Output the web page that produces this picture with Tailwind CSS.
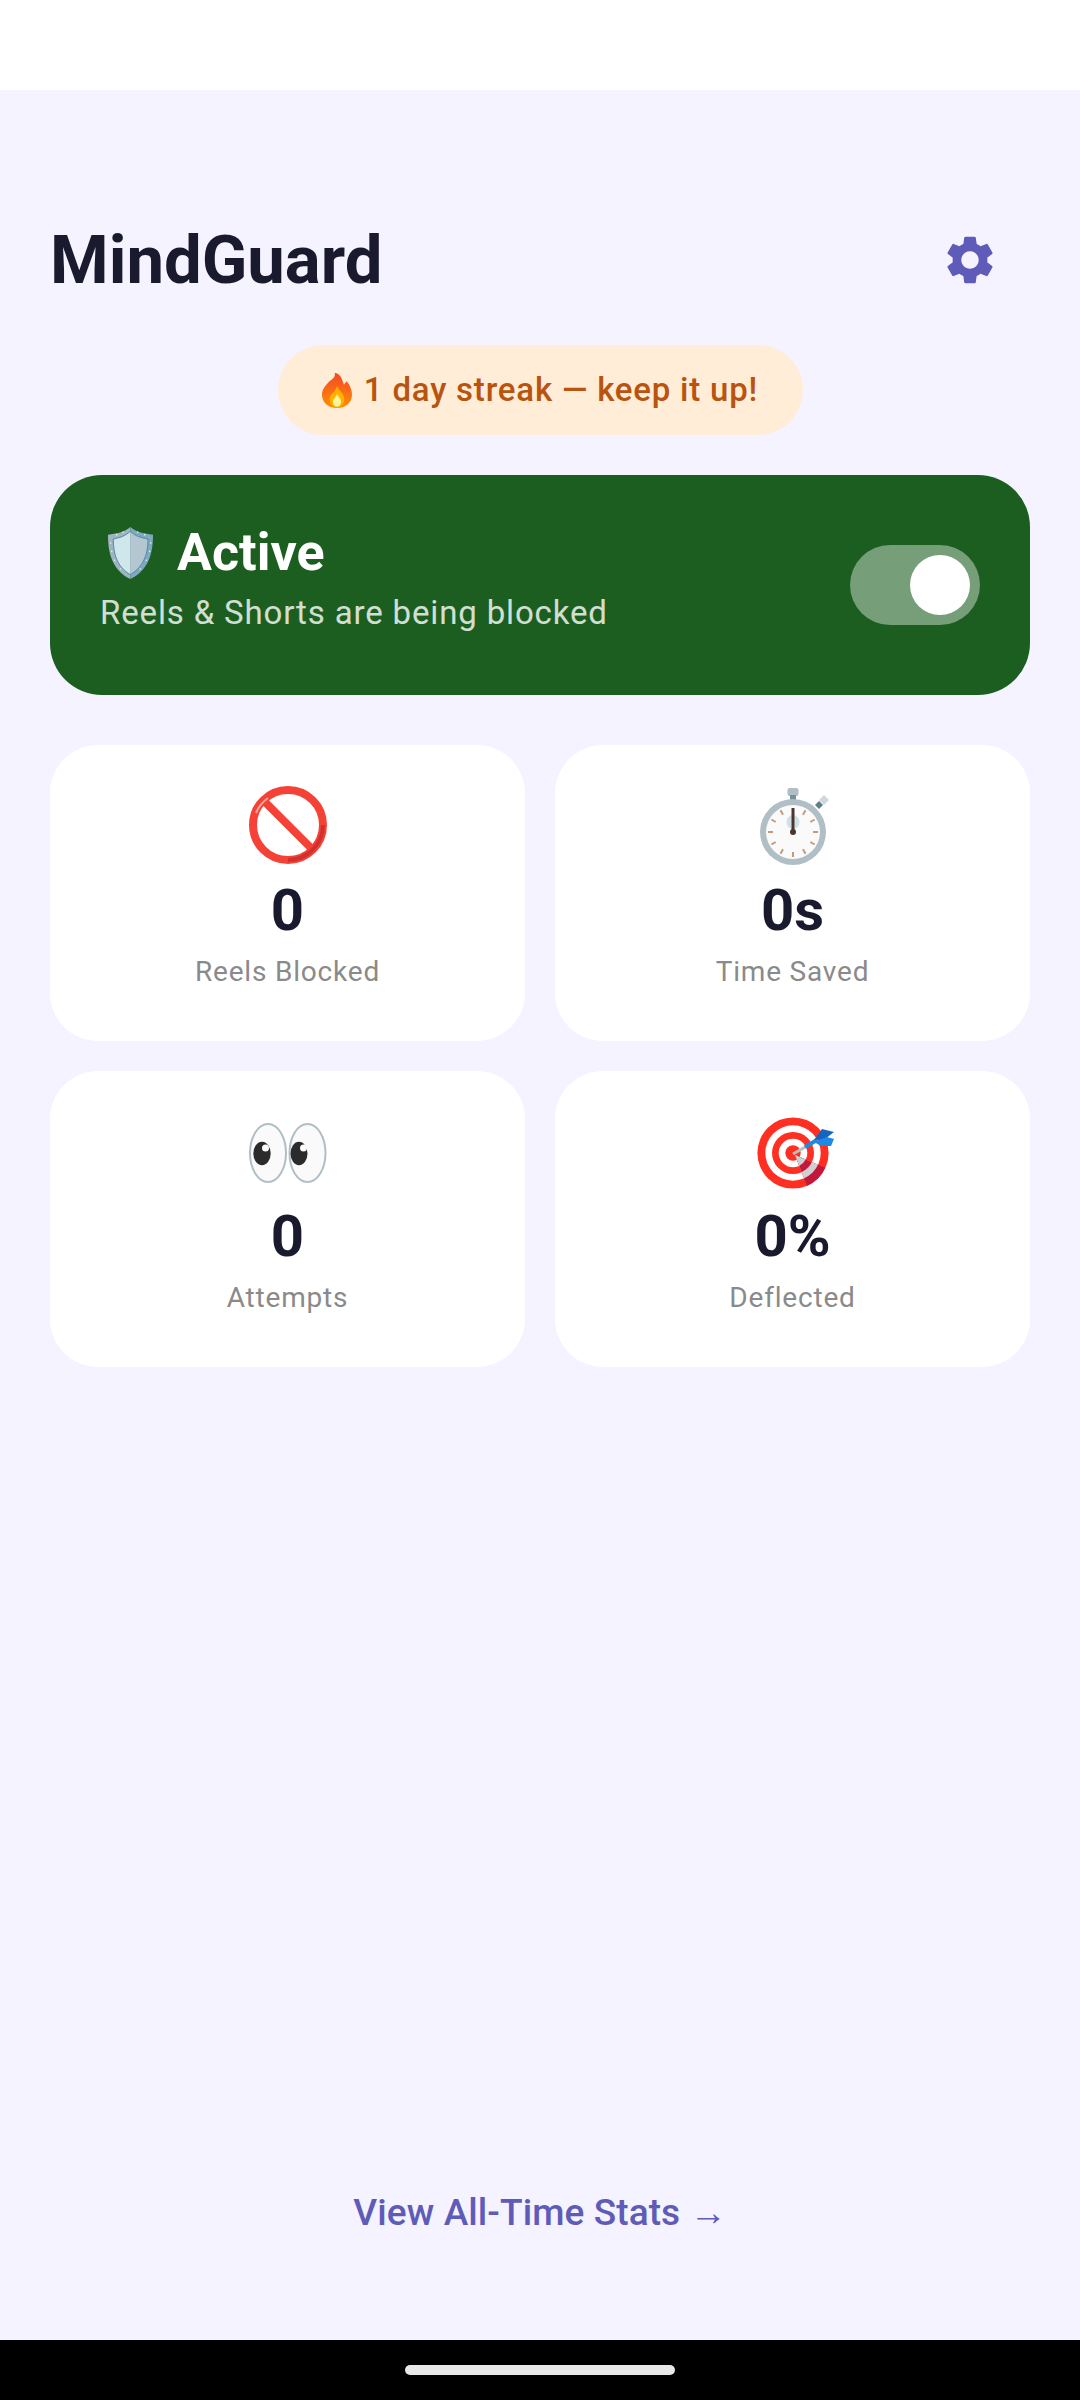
<!DOCTYPE html>
<html lang="en">
<head>
	<meta charset="UTF-8">
	<meta name="viewport" content="width=device-width, initial-scale=1.0">
	<script src="https://cdn.jsdelivr.net/npm/@tailwindcss/browser@4"></script>
	<title>MindGuard</title>
</head>
<body class="w-[1080px] h-[2400px] flex flex-col bg-[#f5f3ff] font-['Roboto',sans-serif] overflow-hidden">
	<!-- status bar area -->
	<div class="h-[90px] bg-white shrink-0"></div>

	<main class="flex-1 flex flex-col px-[50px] pt-[120px]">
		<header class="flex items-center justify-between h-[100px]">
			<h1 class="text-[67px] leading-[100px] font-bold text-[#1a1a2e]">MindGuard</h1>
			<button class="w-[120px] h-[100px] flex items-center justify-center">
				<svg class="w-[58px] h-[58px] fill-[#5f5bb8]" viewBox="0 0 24 24"><path d="M19.14 12.94c.04-.3.06-.61.06-.94 0-.32-.02-.64-.07-.94l2.03-1.58c.18-.14.23-.41.12-.61l-1.92-3.32c-.12-.22-.37-.29-.59-.22l-2.39.96c-.5-.38-1.03-.7-1.62-.94l-.36-2.54c-.04-.24-.24-.41-.48-.41h-3.84c-.24 0-.43.17-.47.41l-.36 2.54c-.59.24-1.13.57-1.62.94l-2.39-.96c-.22-.08-.47 0-.59.22L2.74 8.87c-.12.21-.08.47.12.61l2.03 1.58c-.05.3-.09.63-.09.94s.02.64.07.94l-2.03 1.58c-.18.14-.23.41-.12.61l1.92 3.32c.12.22.37.29.59.22l2.39-.96c.5.38 1.03.7 1.62.94l.36 2.54c.05.24.24.41.48.41h3.84c.24 0 .44-.17.47-.41l.36-2.54c.59-.24 1.13-.56 1.62-.94l2.39.96c.22.08.47 0 .59-.22l1.92-3.32c.12-.22.07-.47-.12-.61l-2.01-1.58zM12 15.6c-1.98 0-3.6-1.62-3.6-3.6s1.62-3.6 3.6-3.6 3.6 1.62 3.6 3.6-1.62 3.6-3.6 3.6z"/></svg>
			</button>
		</header>

		<!-- streak pill -->
		<div class="self-center mt-[35px] h-[90px] w-[525px] rounded-full bg-[#ffedd8] flex items-center justify-center gap-[12px] text-[33px] font-medium tracking-[0.8px] text-[#b8540f]">
			<svg class="w-[30px] h-[36px]" viewBox="0 0 90 108">
				<defs>
					<linearGradient id="flame" x1="0" y1="0" x2="0" y2="1">
						<stop offset="0" stop-color="#f4472a"/>
						<stop offset="1" stop-color="#ff8f00"/>
					</linearGradient>
				</defs>
				<path fill="url(#flame)" d="M38 2C60 6 62 30 66 38c4-4 6-8 8-10 10 12 16 26 16 40 0 24-20 40-45 40S0 92 0 68c0-16 10-26 20-38C30 20 42 16 38 2z"/>
				<path fill="#ffb300" d="M45 42c4 12 22 22 22 40 0 14-10 24-22 24S23 96 23 82c0-16 18-22 22-40z"/>
				<path fill="#fff59d" d="M45 66c3 8 12 12 12 24 0 8-5 14-12 14s-12-6-12-14c0-10 10-14 12-24z"/>
			</svg>
			<span>1 day streak — keep it up!</span>
		</div>

		<!-- protection card -->
		<section class="mt-[40px] h-[220px] rounded-[52px] bg-[#1b5e20] px-[50px] flex items-center justify-between">
			<div class="mb-[14px]">
				<div class="flex items-center gap-[24px] pl-[8px] h-[70px]">
					<svg class="w-[45px] h-[52px]" viewBox="40 22 135 156">
						<path fill="#9fb4bf" d="M107 22C90 38 65 42 40 45c0 50 10 105 67 133z"/>
						<path fill="#7fa9c0" d="M107 22c18 16 43 20 68 23 0 50-10 105-68 133z"/>
						<path fill="#cfe6ea" d="M107 35C90 50 75 54 56 58c0 42 9 82 51 107z"/>
						<path fill="#b4c6cf" d="M107 35c15 15 33 19 53 23 0 42-11 82-53 107z"/>
						<path fill="none" stroke="#4f8ba6" stroke-width="3" d="M107 35C90 50 75 54 56 58c0 42 9 82 51 107 42-25 53-65 53-107-20-4-38-8-53-23z"/>
						<g fill="#e3eef2">
							<circle cx="66" cy="45" r="2.500"/><circle cx="85" cy="38" r="2.500"/><circle cx="129" cy="38" r="2.500"/><circle cx="150" cy="45" r="2.500"/>
							<circle cx="48" cy="70" r="2.500"/><circle cx="51" cy="95" r="2.500"/><circle cx="60" cy="122" r="2.500"/><circle cx="78" cy="148" r="2.500"/>
							<circle cx="168" cy="70" r="2.500"/><circle cx="165" cy="95" r="2.500"/><circle cx="155" cy="122" r="2.500"/><circle cx="137" cy="148" r="2.500"/>
						</g>
					</svg>
					<span class="text-[52px] leading-[70px] font-bold text-white">Active</span>
				</div>
				<p class="text-[33px] leading-[50px] tracking-[0.85px] text-white/80">Reels &amp; Shorts are being blocked</p>
			</div>
			<!-- switch, on -->
			<div class="w-[130px] h-[80px] rounded-full bg-white/40 flex items-center justify-end pr-[10px]">
				<div class="w-[60px] h-[60px] rounded-full bg-white"></div>
			</div>
		</section>

		<!-- stats -->
		<section class="mt-[50px] grid grid-cols-2 gap-[30px]">
			<div class="h-[296px] rounded-[48px] bg-white flex flex-col items-center pt-[40px]">
				<svg class="w-[80px] h-[80px]" viewBox="0 0 80 80">
					<circle cx="40" cy="40" r="35" fill="none" stroke="#f44336" stroke-width="8"/>
					<path d="M15 15l50 50" stroke="#f44336" stroke-width="8"/>
					<path d="M40 75a35 35 0 0 0 35-35" fill="none" stroke="#d32f2f" stroke-width="4"/>
					<path d="M8 28a34 34 0 0 1 12-15" stroke="#ffab9f" stroke-width="2" fill="none"/>
				</svg>
				<p class="mt-[9px] text-[58px] leading-[72px] font-bold text-[#1a1a2e]">0</p>
				<p class="mt-[6px] text-[28px] leading-[40px] tracking-[0.8px] text-[#8a8a8a]">Reels Blocked</p>
			</div>
			<div class="h-[296px] rounded-[48px] bg-white flex flex-col items-center pt-[40px]">
				<svg class="w-[80px] h-[80px]" viewBox="0 0 80 80">
					<rect x="34.500" y="3" width="11" height="8" rx="2" fill="#b0bec5"/>
					<rect x="37" y="10" width="6" height="6" fill="#78909c"/>
					<path d="M66 15l5-5 5 5-5 5z" fill="#cfd8dc"/>
					<path d="M62 20l4-4 4 4-4 4z" fill="#607d8b"/>
					<circle cx="40" cy="47" r="33" fill="#b0bec5"/>
					<circle cx="40" cy="47" r="27" fill="#fafafa"/>
					<ellipse cx="40" cy="37" rx="6.500" ry="7" fill="#cfe0e8"/>
					<path stroke="#c49a7a" stroke-width="2" d="M50 29.700l2.500-4.350M57.300 37l4.350-2.500M60 47h5M57.300 57l4.350 2.500M50 64.300l2.500 4.350M40 67v5M30 64.300l-2.500 4.350M22.700 57l-4.350 2.500M20 47h-5M22.700 37l-4.350-2.500M30 29.700l-2.500-4.350"/>
					<path d="M40 47V23" stroke="#4e342e" stroke-width="3"/>
					<circle cx="40" cy="47" r="3" fill="#4e342e"/>
				</svg>
				<p class="mt-[9px] text-[58px] leading-[72px] font-bold text-[#1a1a2e]">0s</p>
				<p class="mt-[6px] text-[28px] leading-[40px] tracking-[0.8px] text-[#8a8a8a]">Time Saved</p>
			</div>
			<div class="h-[296px] rounded-[48px] bg-white flex flex-col items-center pt-[40px]">
				<svg class="w-[80px] h-[80px]" viewBox="0 0 80 80">
					<ellipse cx="20" cy="42" rx="18" ry="29" fill="#fafafa" stroke="#b0bec5" stroke-width="2"/>
					<ellipse cx="59.500" cy="42" rx="18" ry="29" fill="#fafafa" stroke="#b0bec5" stroke-width="2"/>
					<ellipse cx="14" cy="42.500" rx="8.700" ry="11.700" fill="#2b2b2b"/>
					<ellipse cx="51" cy="42.500" rx="8.500" ry="11.700" fill="#2b2b2b"/>
					<circle cx="17.500" cy="37" r="3.500" fill="#fafafa"/>
					<circle cx="55.500" cy="37" r="3.500" fill="#fafafa"/>
				</svg>
				<p class="mt-[9px] text-[58px] leading-[72px] font-bold text-[#1a1a2e]">0</p>
				<p class="mt-[6px] text-[28px] leading-[40px] tracking-[0.8px] text-[#8a8a8a]">Attempts</p>
			</div>
			<div class="h-[296px] rounded-[48px] bg-white flex flex-col items-center pt-[40px]">
				<svg class="w-[80px] h-[80px] overflow-visible" viewBox="0 0 80 80">
					<defs>
						<clipPath id="wedge"><path d="M42 44L56 80 80 60z"/></clipPath>
					</defs>
					<circle cx="40" cy="42" r="35.600" fill="#ff3021"/>
					<circle cx="40" cy="42" r="27.700" fill="#fff"/>
					<circle cx="40" cy="42" r="21" fill="#ff3021"/>
					<circle cx="40" cy="42" r="14.300" fill="#fff"/>
					<circle cx="40" cy="42" r="7.700" fill="#ff3021"/>
					<!-- dart shadow falling across the rings -->
					<g clip-path="url(#wedge)">
						<circle cx="40" cy="42" r="35.600" fill="#c2183a"/>
						<circle cx="40" cy="42" r="27.700" fill="#d0d0d0"/>
						<circle cx="40" cy="42" r="21" fill="#c2183a"/>
						<circle cx="40" cy="42" r="14.300" fill="#d0d0d0"/>
					</g>
					<path d="M40 43l14-8" stroke="#bdbdbd" stroke-width="3"/>
					<path d="M52 36l12-7" stroke="#1e88e5" stroke-width="4"/>
					<path d="M61 29l8-11 12 3-9 7z" fill="#1565c0"/>
					<path d="M61 31l13-5 7 2-3 7-10 0z" fill="#1e88e5"/>
				</svg>
				<p class="mt-[9px] text-[58px] leading-[72px] font-bold text-[#1a1a2e]">0%</p>
				<p class="mt-[6px] text-[28px] leading-[40px] tracking-[0.8px] text-[#8a8a8a]">Deflected</p>
			</div>
		</section>

		<a class="mt-auto mb-[101px] self-center text-[37px] leading-[52px] tracking-[0.1px] font-medium text-[#5f5bb8]">View All-Time Stats →</a>
	</main>

	<!-- gesture nav bar -->
	<div class="h-[60px] shrink-0 bg-black flex items-center justify-center">
		<div class="w-[270px] h-[10px] rounded-full bg-[#e8e8e8]"></div>
	</div>
</body>
</html>
